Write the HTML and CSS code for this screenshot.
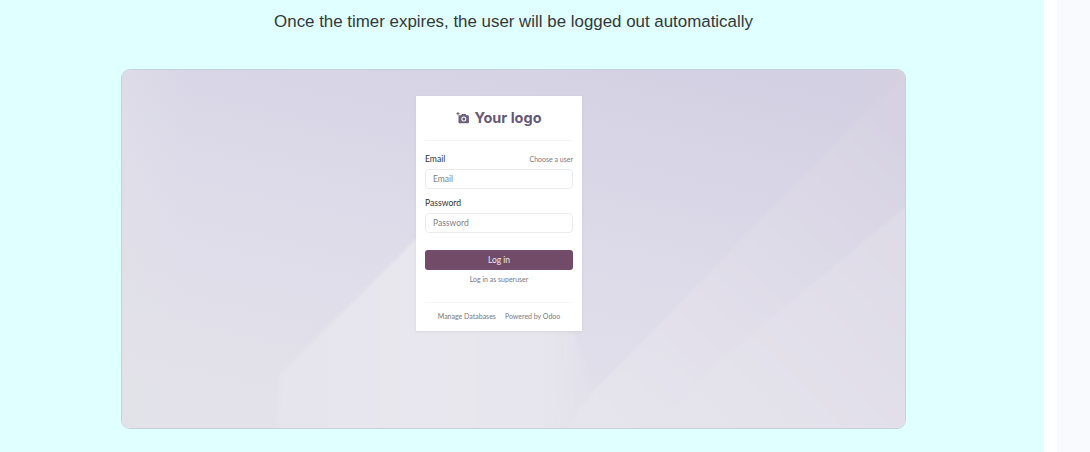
FILE: index.html
```html
<!DOCTYPE html>
<html lang="en">
<head>
<meta charset="utf-8">
<title>Auto logout</title>
<link rel="stylesheet" href="styles.css">
</head>
<body>
<div class="page">
  <main class="content">
    <div class="inner">
      <h2 class="headline">Once the timer expires, the user will be logged out automatically</h2>
      <div class="shot">
        <svg class="shot-bg" viewBox="0 0 785 360" preserveAspectRatio="none" aria-hidden="true">
          <defs>
            <linearGradient id="base" x1="0.8" y1="0" x2="0.3" y2="1">
              <stop offset="0" stop-color="#d3d0e3"/>
              <stop offset="0.5" stop-color="#dddbe9"/>
              <stop offset="1" stop-color="#e3e2ea"/>
            </linearGradient>
            <linearGradient id="edge" x1="0" y1="0" x2="1" y2="0">
              <stop offset="0" stop-color="#e2e2e8" stop-opacity="0.4"/>
              <stop offset="0.08" stop-color="#e2e2e8" stop-opacity="0"/>
              <stop offset="0.93" stop-color="#d8d0de" stop-opacity="0"/>
              <stop offset="1" stop-color="#d8d0de" stop-opacity="0.6"/>
            </linearGradient>
            <linearGradient id="bandA" gradientUnits="userSpaceOnUse" x1="150" y1="0" x2="480" y2="0">
              <stop offset="0" stop-color="#e5e4ec"/>
              <stop offset="0.45" stop-color="#e8e7ef"/>
              <stop offset="0.85" stop-color="#e6e5ed"/>
              <stop offset="1" stop-color="#e6e5ed" stop-opacity="0"/>
            </linearGradient>
            <linearGradient id="bandB" gradientUnits="userSpaceOnUse" x1="470" y1="360" x2="760" y2="40">
              <stop offset="0" stop-color="#e6e5ed"/>
              <stop offset="0.5" stop-color="#e0dde9"/>
              <stop offset="1" stop-color="#d6d2e3"/>
            </linearGradient>
            <linearGradient id="bandC" gradientUnits="userSpaceOnUse" x1="560" y1="360" x2="785" y2="140">
              <stop offset="0" stop-color="#e5e4ec"/>
              <stop offset="1" stop-color="#dedbe7"/>
            </linearGradient>
            <filter id="soft"><feGaussianBlur stdDeviation="1.5"/></filter>
          </defs>
          <rect width="785" height="360" fill="url(#base)"/>
          <rect width="785" height="360" fill="url(#edge)"/>
          <g filter="url(#soft)">
            <polygon points="155,365 158,306 295,170 420,170 480,340 480,365" fill="url(#bandA)"/>
            <polygon points="445,365 469,327 742,47 790,5 790,365" fill="url(#bandB)"/>
            <polygon points="530,365 599,293 779,143 790,135 790,365" fill="url(#bandC)"/>
          </g>
        </svg>
        <form class="card">
          <div class="logo">
            <svg class="logo-icon" viewBox="0 0 14 12" aria-hidden="true">
              <path d="M3.5 3.2h1.6l.9-1.2h3.6l.9 1.2h1.4c.6 0 1 .4 1 1v6c0 .6-.4 1-1 1H3.5c-.6 0-1-.4-1-1v-6c0-.6.4-1 1-1z" fill="#6b5f7c"/>
              <circle cx="7.8" cy="7.1" r="2.5" fill="#fff"/>
              <circle cx="7.8" cy="7.1" r="1.5" fill="#6b5f7c"/>
              <path d="M2 0v3.4M.4 1.7h3.2" stroke="#6b5f7c" stroke-width="1"/>
            </svg>
            <span class="logo-text">Your logo</span>
          </div>
          <div class="label-row">
            <span class="label">Email</span>
            <span class="small">Choose a user</span>
          </div>
          <div class="input">Email</div>
          <div class="label-row password-label">
            <span class="label">Password</span>
          </div>
          <div class="input">Password</div>
          <div class="button">Log in</div>
          <div class="superuser">Log in as superuser</div>
          <div class="footer">
            <span class="small">Manage Databases</span>
            <span class="small">Powered by Odoo</span>
          </div>
        </form>
      </div>
    </div>
  </main>
  <div class="gutter"></div>
  <aside class="rail"></aside>
</div>
</body>
</html>
```
FILE: styles.css
```css
* { box-sizing: border-box; }
html, body { margin: 0; height: 100%; }
body { background: #fff; font-family: "Liberation Sans", Arial, sans-serif; overflow: hidden; }
.page { display: flex; height: 452px; }
.content { width: 1044px; background: #e0ffff; padding-right: 17px; }
.gutter { width: 13px; background: #fff; }
.rail { flex: 1; background: #f9fafe; }
.inner { display: flex; flex-direction: column; align-items: center; }
.headline { margin: 12px 0 0; font-size: 16.9px; line-height: 20px; font-weight: 400; color: #34373a; }
.shot { position: relative; width: 785px; height: 360px; margin-top: 37px; border: 1px solid #c6d0d9; border-radius: 9px; overflow: hidden; display: flex; justify-content: center; align-items: flex-start; padding-top: 26px; }
.shot-bg { position: absolute; inset: 0; width: 100%; height: 100%; }
.card { position: relative; width: 166px; height: 235px; background: #fff; padding: 0 9px; margin-right: 29px; display: flex; flex-direction: column; font-family: Lato, "Noto Sans", sans-serif; box-shadow: 0 1px 3px rgba(80,80,110,.1); }
.logo { display: flex; align-items: center; justify-content: center; gap: 4px; height: 45px; border-bottom: 1px solid #f4f4f6; margin-bottom: 12px; }
.logo-icon { width: 14px; height: 12px; margin-top: -1px; }
.logo-text { font-family: Inter, Lato, sans-serif; font-size: 14.5px; font-weight: 700; color: #65587a; margin-top: -1px; }
.label-row { display: flex; justify-content: space-between; align-items: center; height: 12px; margin-bottom: 4px; }
.password-label { margin-top: 8px; }
.label { font-size: 8.6px; font-weight: 400; color: #2f3036; }
.small { font-size: 7px; color: #77777f; }
.input { height: 20px; border: 1px solid #e9ecef; border-radius: 4px; padding-left: 7px; font-size: 8.5px; line-height: 18px; color: #7b7f85; }
.button { height: 20px; margin-top: 17px; border-radius: 3px; background: #714b67; color: #efe9ee; font-size: 8.5px; line-height: 20px; text-align: center; }
.superuser { margin-top: 3px; height: 12px; font-size: 7px; line-height: 12px; color: #77777f; text-align: center; }
.footer { display: flex; justify-content: center; gap: 9px; margin-top: 17px; padding-top: 9px; border-top: 1px solid #f6f6f8; }
```
